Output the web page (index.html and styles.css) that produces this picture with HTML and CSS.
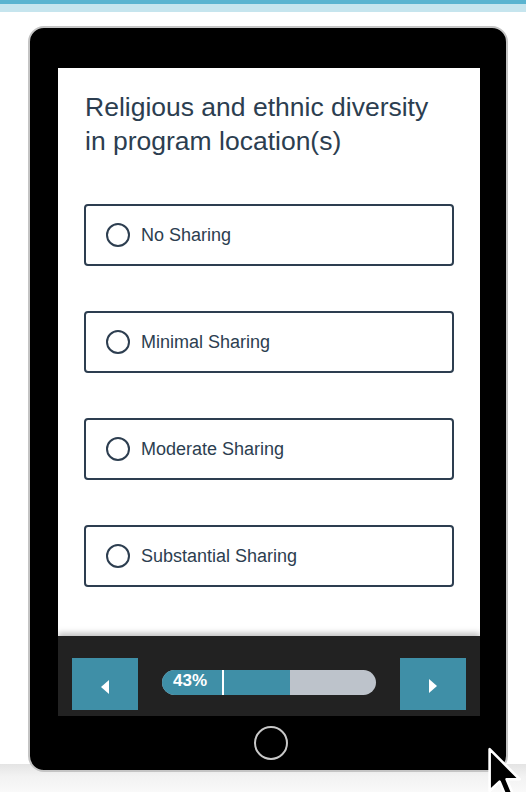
FILE: index.html
```html
<!DOCTYPE html>
<html lang="en">
<head>
  <meta charset="UTF-8">
  <title>Survey - Program Location</title>
  <link rel="stylesheet" href="styles.css">
</head>
<body>

<div class="topbar"></div>

<div class="stage">
  <div class="tablet">
    <div class="screen">
      <div class="question">
        <h2>Religious and ethnic diversity in program location(s)</h2>
        <div class="options">
          <label class="option"><span class="radio"></span>No Sharing</label>
          <label class="option"><span class="radio"></span>Minimal Sharing</label>
          <label class="option"><span class="radio"></span>Moderate Sharing</label>
          <label class="option"><span class="radio"></span>Substantial Sharing</label>
        </div>
      </div>
      <div class="nav-bar">
        <button class="nav-btn prev"><span class="arrow-left"></span></button>
        <div class="progress">
          <div class="progress-fill" style="width: 60%;"></div>
          <span class="progress-label">43%</span>
          <span class="progress-mark"></span>
        </div>
        <button class="nav-btn next"><span class="arrow-right"></span></button>
      </div>
    </div>
    <div class="home-row">
      <span class="home-btn"></span>
    </div>
  </div>
  <div class="floor"></div>

  <svg class="cursor" width="34" height="56" viewBox="0 0 13 21">
    <path d="M1 1 L1 17 L4.8 13.4 L7.4 19.6 L10 18.5 L7.5 12.5 L12.5 12.5 Z" fill="#000" stroke="#fff" stroke-width="1" stroke-linejoin="round"/>
  </svg>
</div>

</body>
</html>
```

FILE: styles.css
```css
body {
  margin: 0;
  background-color: #fff;
  font-family: "Liberation Sans", Arial, sans-serif;
  color: #2c3e50;
}
.topbar {
  height: 4px;
  background-color: #5ab4d0;
  border-bottom: 8px solid #c6e5ee;
}
.stage {
  position: relative;
  height: 780px;
  overflow: hidden;
}
.tablet {
  margin: 14px 0 0 28px;
  width: 480px;
  height: 746px;
  box-sizing: border-box;
  background-color: #000;
  border: 2px solid #c4c4c4;
  border-radius: 16px;
  padding: 40px 26px 0 28px;
  position: relative;
  z-index: 1;
}
.screen {
  background-color: #fff;
  width: 422px;
}
.question {
  height: 568px;
  box-sizing: border-box;
  padding: 22px 26px 0 26px;
}
.question h2 {
  margin: 0 0 0 1px;
  font-weight: normal;
  font-size: 26.5px;
  line-height: 34px;
  width: 360px;
}
.options {
  margin-top: 46px;
  display: flex;
  flex-direction: column;
  gap: 45px;
}
.option {
  display: flex;
  align-items: center;
  gap: 11px;
  height: 62px;
  box-sizing: border-box;
  border: 2px solid #2d3e50;
  border-radius: 4px;
  padding: 0 0 0 20px;
  font-size: 18px;
  cursor: pointer;
}
.radio {
  width: 20px;
  height: 20px;
  border: 2px solid #2d3e50;
  border-radius: 50%;
}
.nav-bar {
  height: 80px;
  box-sizing: border-box;
  background-color: #222;
  display: flex;
  align-items: flex-start;
  gap: 24px;
  padding: 22px 14px 0 14px;
  box-shadow: 0 -3px 6px rgba(0, 0, 0, 0.25);
  position: relative;
}
.nav-btn {
  width: 66px;
  height: 52px;
  background-color: #3f8fa7;
  border: none;
  padding: 0;
  display: flex;
  align-items: center;
  justify-content: center;
  cursor: pointer;
}
.arrow-left {
  border-top: 7px solid transparent;
  border-bottom: 7px solid transparent;
  border-right: 8px solid #fff;
  margin-top: 6px;
}
.arrow-right {
  border-top: 7px solid transparent;
  border-bottom: 7px solid transparent;
  border-left: 8px solid #fff;
  margin-top: 4px;
}
.progress {
  flex: 1;
  height: 25px;
  margin-top: 12px;
  background-color: #bdc3cb;
  border-radius: 13px;
  overflow: hidden;
  position: relative;
}
.progress-fill {
  height: 100%;
  background-color: #3f8fa7;
}
.progress-label {
  position: absolute;
  left: 11px;
  top: 1px;
  color: #fff;
  font-size: 17px;
  font-weight: bold;
  line-height: 20px;
}
.progress-mark {
  position: absolute;
  left: 60px;
  top: 0;
  width: 2px;
  height: 100%;
  background-color: #fff;
}
.home-row {
  height: 54px;
  display: flex;
  align-items: center;
  justify-content: center;
  padding-left: 4px;
}
.home-btn {
  width: 30px;
  height: 30px;
  border: 2px solid #c8c8c8;
  border-radius: 50%;
}
.floor {
  height: 30px;
  margin-top: -8px;
  background: linear-gradient(to bottom, #e4e4e4, #f2f2f2 40%, #fafafa);
}
.cursor {
  position: absolute;
  left: 487px;
  top: 734px;
  z-index: 2;
}
```
